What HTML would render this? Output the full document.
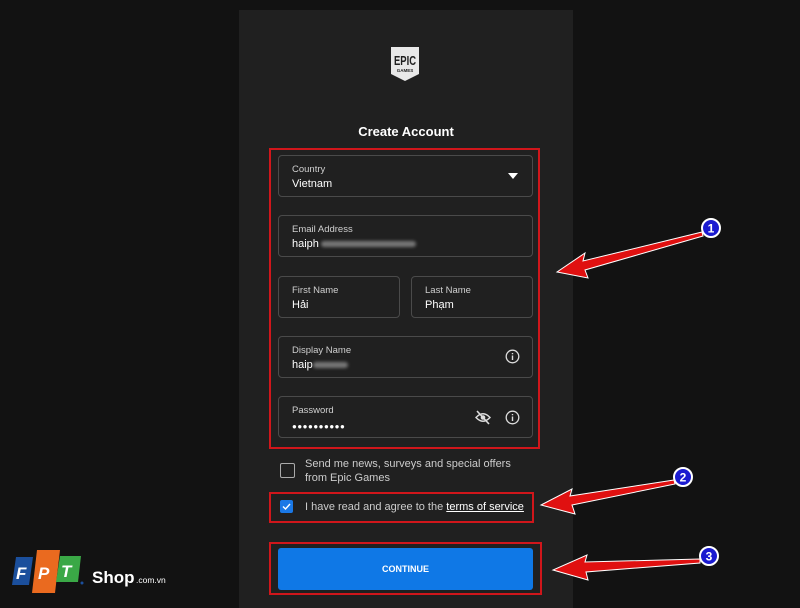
<!DOCTYPE html>
<html><head><meta charset="utf-8"><style>
body{margin:0;width:800px;height:608px;background:#121212;position:relative;overflow:hidden;font-family:"Liberation Sans",sans-serif;color:#fff}
.panel{position:absolute;left:239px;top:10px;width:334px;height:598px;background:#202020}
.f{position:absolute;border:1px solid #4a4a4a;border-radius:4px;background:#202020;box-sizing:border-box}
.f .l{position:absolute;left:13px;top:8px;font-size:9.5px;color:#cfcfcf}
.f .v{position:absolute;left:13px;top:22px;font-size:11px;color:#fff}
.red{position:absolute;border:2px solid #d0161b;box-sizing:border-box}
.abs{position:absolute}
.blur{display:inline-block;height:6px;background:#777;border-radius:3px;filter:blur(1.5px);vertical-align:middle}
</style></head><body>
<div class="panel"></div>
<svg class="abs" style="left:390px;top:46px" width="30" height="36" viewBox="0 0 30 36"><path d="M1 1h28v27l-14 7-14-7z" fill="#e8e8e8"/><text x="15" y="19" font-size="13" font-weight="bold" text-anchor="middle" fill="#202020" font-family="Liberation Sans Narrow,Liberation Sans" textLength="22" lengthAdjust="spacingAndGlyphs">EPIC</text><text x="15" y="26" font-size="4.5" font-weight="bold" text-anchor="middle" fill="#202020">GAMES</text></svg>
<div class="abs" style="left:239px;width:334px;top:124px;text-align:center;font-size:13px;font-weight:bold">Create Account</div>
<div class="f" style="left:278px;top:155px;width:255px;height:42px"><div class="l">Country</div><div class="v">Vietnam</div>
<svg class="abs" style="left:229px;top:17px" width="10" height="6"><path d="M0 0h10L5 6z" fill="#fff"/></svg></div>
<div class="f" style="left:278px;top:215px;width:255px;height:42px"><div class="l">Email Address</div><div class="v">haiph<span class="blur" style="width:95px;margin-left:2px"></span></div></div>
<div class="f" style="left:278px;top:276px;width:122px;height:42px"><div class="l">First Name</div><div class="v">Hải</div></div>
<div class="f" style="left:411px;top:276px;width:122px;height:42px"><div class="l">Last Name</div><div class="v">Phạm</div></div>
<div class="f" style="left:278px;top:336px;width:255px;height:42px"><div class="l">Display Name</div><div class="v">haip<span class="blur" style="width:35px"></span></div>
<svg class="abs" style="left:226px;top:12px" width="15" height="15"><circle cx="7.5" cy="7.5" r="6.3" fill="none" stroke="#ddd" stroke-width="1.3"/><path d="M7.5 6.5v4.5M7.5 4v1.2" stroke="#ddd" stroke-width="1.4"/></svg></div>
<div class="f" style="left:278px;top:396px;width:255px;height:42px"><div class="l">Password</div><div class="v" style="letter-spacing:0.5px;font-size:8px;top:25px">●●●●●●●●●●</div>
<svg class="abs" style="left:196px;top:13px" width="16" height="15"><path d="M1 7.5Q8 0 15 7.5Q8 15 1 7.5z" fill="none" stroke="#ddd" stroke-width="1.4"/><circle cx="8" cy="7.5" r="2.3" fill="#ddd"/><path d="M2 1l12 13" stroke="#ddd" stroke-width="1.6"/></svg>
<svg class="abs" style="left:226px;top:13px" width="15" height="15"><circle cx="7.5" cy="7.5" r="6.3" fill="none" stroke="#ddd" stroke-width="1.3"/><path d="M7.5 6.5v4.5M7.5 4v1.2" stroke="#ddd" stroke-width="1.4"/></svg></div>
<div class="red" style="left:269px;top:148px;width:271px;height:301px"></div>
<div class="abs" style="left:280px;top:463px;width:13px;height:13px;border:1px solid #aaa;border-radius:2px"></div>
<div class="abs" style="left:305px;top:457px;font-size:11px;color:#ccc;line-height:14px">Send me news, surveys and special offers<br>from Epic Games</div>
<div class="abs" style="left:280px;top:500px;width:13px;height:13px;background:#1a78e6;border-radius:2px"><svg width="13" height="13"><path d="M3 6.5l2.5 2.5 4.5-5" fill="none" stroke="#fff" stroke-width="1.4"/></svg></div>
<div class="abs" style="left:305px;top:501px;font-size:11px;color:#ccc">I have read and agree to the <span style="color:#fff;text-decoration:underline">terms of service</span></div>
<div class="red" style="left:269px;top:492px;width:265px;height:31px"></div>
<div class="abs" style="left:278px;top:548px;width:255px;height:42px;background:#0f78e6;border-radius:3px;text-align:center;line-height:42px;font-size:9px;font-weight:bold">CONTINUE</div>
<div class="red" style="left:269px;top:542px;width:273px;height:53px"></div>
<svg class="abs" style="left:0;top:0" width="800" height="608">
<g fill="#e01010" stroke="#fff" stroke-width="1">
<path d="M702 232L583 261L585 253L557 272L588 278L585 270L703 236z"/>
<path d="M674 480L570 496L572 489L541 505L575 514L572 505L675 484z"/>
<path d="M700 559L585 562L587 555L553 570L588 580L586 572L700 563z"/>
</g>
<g font-family="Liberation Sans" font-weight="bold" font-size="12" text-anchor="middle">
<circle cx="711" cy="228" r="9" fill="#1a1ad0" stroke="#fff" stroke-width="2"/><text x="711" y="232.5" fill="#fff">1</text>
<circle cx="683" cy="477" r="9" fill="#1a1ad0" stroke="#fff" stroke-width="2"/><text x="683" y="481.5" fill="#fff">2</text>
<circle cx="709" cy="556" r="9" fill="#1a1ad0" stroke="#fff" stroke-width="2"/><text x="709" y="560.5" fill="#fff">3</text>
</g>
<g font-family="Liberation Sans" font-weight="bold" font-style="italic" font-size="17" fill="#fff">
<path d="M16 557h17l-4 28h-17z" fill="#1b4f9c"/>
<path d="M37 550h23l-5 43h-23z" fill="#ea6a1f"/>
<path d="M60 556h21l-3 26h-22z" fill="#3aa846"/>
<text x="16" y="579">F</text><text x="38" y="579">P</text><text x="61" y="577">T</text>
<circle cx="82" cy="583" r="1.5" fill="#1b4f9c"/>
<text x="92" y="583" font-style="normal" font-size="17">Shop</text>
<text x="136" y="583" font-style="normal" font-weight="normal" font-size="8.5">.com.vn</text>
</g>
</svg>
</body></html>
